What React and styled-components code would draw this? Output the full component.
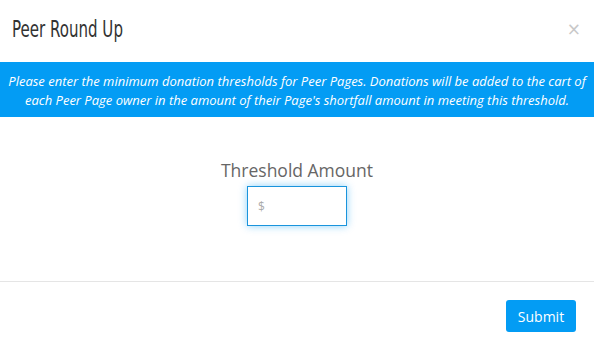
import React, { useState } from 'react'
import styled, { createGlobalStyle } from 'styled-components'

const GlobalStyle = createGlobalStyle`
  html, body {
    margin: 0;
    padding: 0;
    background: #fff;
  }
  body {
    font-family: "Open Sans", "Liberation Sans", sans-serif;
  }
`

const Modal = styled.div`
  width: 594px;
  height: 351px;
  display: flex;
  flex-direction: column;
  background: #fff;
`

const Header = styled.div`
  height: 62px;
  display: flex;
  align-items: center;
  justify-content: space-between;
  padding: 0 13px 4px 12px;
  box-sizing: border-box;
`

// condensed display face isn't installed, so squeeze DejaVu to match
const Title = styled.h4`
  margin: 0;
  display: inline-block;
  font-family: "DejaVu Sans", sans-serif;
  font-weight: 400;
  font-size: 23.5px;
  color: #333;
  transform: scaleX(0.64);
  transform-origin: left center;
`

const CloseBtn = styled.button`
  border: 0;
  background: none;
  padding: 0;
  font-size: 17px;
  line-height: 1;
  color: #c8c8c8;
  cursor: pointer;
  font-family: "DejaVu Sans", sans-serif;
`

const Notice = styled.div`
  background: #039cf4;
  color: #fff;
  font-style: italic;
  font-size: 13px;
  line-height: 19px;
  text-align: center;
  padding: 10px 4px 7px;
`

const Body = styled.div`
  flex: 0 0 auto;
  height: 164px;
  display: flex;
  flex-direction: column;
  align-items: center;
  padding-top: 41px;
  box-sizing: border-box;
`

const Label = styled.label`
  font-size: 17.5px;
  color: #666;
  line-height: 24px;
  margin-bottom: 4px;
`

const AmountInput = styled.input`
  width: 100px;
  height: 40px;
  box-sizing: border-box;
  border: 1px solid #1a94dc;
  outline: none;
  box-shadow: 0 0 8px rgba(3, 156, 244, 0.45);
  padding: 0 10px;
  font-family: "Open Sans", sans-serif;
  font-size: 12px;
  color: #333;
  &::placeholder {
    color: #aaa;
  }
`

const Footer = styled.div`
  border-top: 1px solid #e5e5e5;
  display: flex;
  justify-content: flex-end;
  padding: 18px 18px 0;
`

const SubmitBtn = styled.button`
  width: 70px;
  height: 32px;
  border: 0;
  border-radius: 3px;
  background: #039cf4;
  color: #fff;
  font-family: "Open Sans", sans-serif;
  font-size: 14px;
  cursor: pointer;
`

const App = () => {
  const [amount, setAmount] = useState('')

  return (
    <>
      <GlobalStyle />
      <Modal>
        <Header>
          <Title>Peer Round Up</Title>
          <CloseBtn aria-label="Close">×</CloseBtn>
        </Header>
        <Notice>
          Please enter the minimum donation thresholds for Peer Pages. Donations will be added to the cart of
          each Peer Page owner in the amount of their Page's shortfall amount in meeting this threshold.
        </Notice>
        <Body>
          <Label htmlFor="threshold">Threshold Amount</Label>
          <AmountInput
            id="threshold"
            placeholder="$"
            autoFocus
            value={amount}
            onChange={(e) => setAmount(e.target.value)}
          />
        </Body>
        <Footer>
          <SubmitBtn>Submit</SubmitBtn>
        </Footer>
      </Modal>
    </>
  )
}

export default App
